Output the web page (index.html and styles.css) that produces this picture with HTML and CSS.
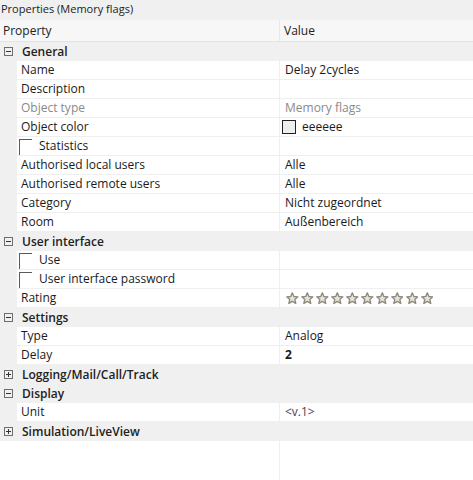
FILE: index.html
```html
<!DOCTYPE html>
<html>
<head>
<meta charset="utf-8">
<link rel="stylesheet" href="styles.css">
</head>
<body>
<div class="panel">
  <div class="title">Properties (Memory flags)</div>
  <div class="header">
    <div class="hcell">Property</div>
    <div class="hcell hval">Value</div>
  </div>
  <div class="rows">
    <div class="group"><span class="toggle minus"></span><span class="gname">General</span></div>
    <div class="row"><div class="gutter"></div><div class="prop">Name</div><div class="val">Delay 2cycles</div></div>
    <div class="row"><div class="gutter"></div><div class="prop">Description</div><div class="val"></div></div>
    <div class="row disabled"><div class="gutter"></div><div class="prop">Object type</div><div class="val">Memory flags</div></div>
    <div class="row"><div class="gutter"></div><div class="prop">Object color</div><div class="val"><span class="swatch"></span>eeeeee</div></div>
    <div class="row"><div class="gutter"></div><div class="prop"><span class="check"></span>Statistics</div><div class="val"></div></div>
    <div class="row"><div class="gutter"></div><div class="prop">Authorised local users</div><div class="val">Alle</div></div>
    <div class="row"><div class="gutter"></div><div class="prop">Authorised remote users</div><div class="val">Alle</div></div>
    <div class="row"><div class="gutter"></div><div class="prop">Category</div><div class="val">Nicht zugeordnet</div></div>
    <div class="row"><div class="gutter"></div><div class="prop">Room</div><div class="val">Außenbereich</div></div>
    <div class="group"><span class="toggle minus"></span><span class="gname">User interface</span></div>
    <div class="row"><div class="gutter"></div><div class="prop"><span class="check"></span>Use</div><div class="val"></div></div>
    <div class="row"><div class="gutter"></div><div class="prop"><span class="check"></span>User interface password</div><div class="val"></div></div>
    <div class="row"><div class="gutter"></div><div class="prop">Rating</div><div class="val stars">
      <svg class="star" viewBox="0 0 12 12"><path d="M6 0.8 L7.5 4.3 L11.3 4.6 L8.4 7.1 L9.3 10.9 L6 8.9 L2.7 10.9 L3.6 7.1 L0.7 4.6 L4.5 4.3 Z"/></svg>
      <svg class="star" viewBox="0 0 12 12"><path d="M6 0.8 L7.5 4.3 L11.3 4.6 L8.4 7.1 L9.3 10.9 L6 8.9 L2.7 10.9 L3.6 7.1 L0.7 4.6 L4.5 4.3 Z"/></svg>
      <svg class="star" viewBox="0 0 12 12"><path d="M6 0.8 L7.5 4.3 L11.3 4.6 L8.4 7.1 L9.3 10.9 L6 8.9 L2.7 10.9 L3.6 7.1 L0.7 4.6 L4.5 4.3 Z"/></svg>
      <svg class="star" viewBox="0 0 12 12"><path d="M6 0.8 L7.5 4.3 L11.3 4.6 L8.4 7.1 L9.3 10.9 L6 8.9 L2.7 10.9 L3.6 7.1 L0.7 4.6 L4.5 4.3 Z"/></svg>
      <svg class="star" viewBox="0 0 12 12"><path d="M6 0.8 L7.5 4.3 L11.3 4.6 L8.4 7.1 L9.3 10.9 L6 8.9 L2.7 10.9 L3.6 7.1 L0.7 4.6 L4.5 4.3 Z"/></svg>
      <svg class="star" viewBox="0 0 12 12"><path d="M6 0.8 L7.5 4.3 L11.3 4.6 L8.4 7.1 L9.3 10.9 L6 8.9 L2.7 10.9 L3.6 7.1 L0.7 4.6 L4.5 4.3 Z"/></svg>
      <svg class="star" viewBox="0 0 12 12"><path d="M6 0.8 L7.5 4.3 L11.3 4.6 L8.4 7.1 L9.3 10.9 L6 8.9 L2.7 10.9 L3.6 7.1 L0.7 4.6 L4.5 4.3 Z"/></svg>
      <svg class="star" viewBox="0 0 12 12"><path d="M6 0.8 L7.5 4.3 L11.3 4.6 L8.4 7.1 L9.3 10.9 L6 8.9 L2.7 10.9 L3.6 7.1 L0.7 4.6 L4.5 4.3 Z"/></svg>
      <svg class="star" viewBox="0 0 12 12"><path d="M6 0.8 L7.5 4.3 L11.3 4.6 L8.4 7.1 L9.3 10.9 L6 8.9 L2.7 10.9 L3.6 7.1 L0.7 4.6 L4.5 4.3 Z"/></svg>
      <svg class="star" viewBox="0 0 12 12"><path d="M6 0.8 L7.5 4.3 L11.3 4.6 L8.4 7.1 L9.3 10.9 L6 8.9 L2.7 10.9 L3.6 7.1 L0.7 4.6 L4.5 4.3 Z"/></svg>
    </div></div>
    <div class="group"><span class="toggle minus"></span><span class="gname">Settings</span></div>
    <div class="row"><div class="gutter"></div><div class="prop">Type</div><div class="val">Analog</div></div>
    <div class="row"><div class="gutter"></div><div class="prop">Delay</div><div class="val bold">2</div></div>
    <div class="group"><span class="toggle plus"></span><span class="gname">Logging/Mail/Call/Track</span></div>
    <div class="group"><span class="toggle minus"></span><span class="gname">Display</span></div>
    <div class="row"><div class="gutter"></div><div class="prop">Unit</div><div class="val unit">&lt;v.1&gt;</div></div>
    <div class="group"><span class="toggle plus"></span><span class="gname">Simulation/LiveView</span></div>
  </div>
  <div class="filler"><div class="fprop"></div><div class="fval"></div></div>
</div>
</body>
</html>
```

FILE: styles.css
```css
html, body {
  margin: 0;
  padding: 0;
  background: #ffffff;
}
body {
  font-family: "Open Sans", "Noto Sans", "DejaVu Sans", sans-serif;
  font-size: 12px;
  color: #1a1a1a;
}
.panel {
  width: 473px;
  height: 480px;
  display: flex;
  flex-direction: column;
  overflow: hidden;
}
.title {
  height: 19px;
  line-height: 18px;
  padding-left: 1px;
  background: #f0f0f0;
  color: #222;
  white-space: nowrap;
  font-size: 11px;
}
.header {
  display: grid;
  grid-template-columns: 280px 1fr;
  height: 21px;
  background: #f7f7f7;
  border-bottom: 1px solid #e3e3e3;
  border-top: 1px solid #f2f2f2;
}
.hcell {
  line-height: 21px;
  padding-left: 3px;
  color: #222;
}
.hval {
  border-left: 1px solid #e8e8e8;
  padding-left: 4px;
  margin-left: -1px;
}
.rows {
  display: flex;
  flex-direction: column;
}
.group {
  height: 19px;
  background: #f0f0f0;
  display: flex;
  align-items: center;
}
.toggle {
  width: 7px;
  height: 7px;
  border: 1px solid #6e6e6e;
  margin-left: 4px;
  margin-right: 9px;
  position: relative;
  flex: none;
}
.toggle::before {
  content: "";
  position: absolute;
  left: 1px;
  top: 3px;
  width: 5px;
  height: 1px;
  background: #333;
}
.toggle.plus::after {
  content: "";
  position: absolute;
  left: 3px;
  top: 1px;
  width: 1px;
  height: 5px;
  background: #333;
}
.gname {
  font-weight: 600;
  color: #222;
  white-space: nowrap;
}
.row {
  display: grid;
  grid-template-columns: 17px 262px 1fr;
  height: 19px;
}
.gutter {
  background: #f0f0f0;
}
.prop, .val {
  background: #fff;
  border-bottom: 1px solid #efefef;
  line-height: 18px;
  white-space: nowrap;
  display: flex;
  align-items: center;
}
.prop {
  padding-left: 4px;
}
.val {
  border-left: 1px solid #efefef;
  padding-left: 5px;
}
.disabled .prop, .disabled .val {
  color: #8a8a8a;
}
.check {
  width: 13px;
  height: 16px;
  border-top: 1px solid #5a5a5a;
  border-left: 1px solid #5a5a5a;
  margin-left: -2px;
  margin-right: 7px;
  align-self: flex-end;
  box-sizing: border-box;
}
.swatch {
  width: 14px;
  height: 14px;
  border: 1px solid #222;
  background: #eeeeee;
  margin-left: -3px;
  margin-right: 6px;
  box-sizing: border-box;
}
.stars {
  gap: 2.4px;
  padding-left: 6px;
}
.star {
  width: 12.6px;
  height: 12.6px;
}
.star path {
  fill: #e6e4da;
  stroke: #8d8a7d;
  stroke-width: 1.3;
  stroke-linejoin: round;
}
.bold {
  font-weight: bold;
}
.unit {
  color: #4a3f5a;
}
.filler {
  flex: 1;
  display: grid;
  grid-template-columns: 279px 1fr;
}
.fval {
  border-left: 1px solid #efefef;
}
```
